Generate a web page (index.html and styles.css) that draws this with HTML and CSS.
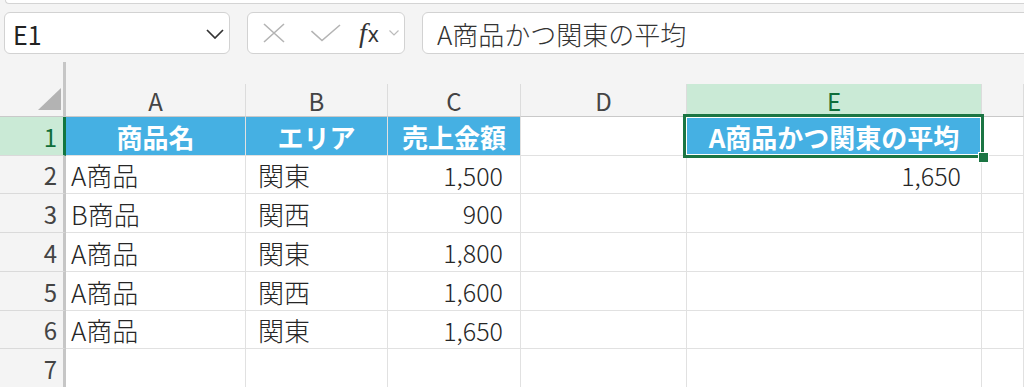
FILE: index.html
```html
<!DOCTYPE html>
<html lang="ja">
  <head>
    <meta charset="UTF-8" />
    <meta name="viewport" content="width=device-width, initial-scale=1.0" />
    <title>Sheet</title>
    <link rel="stylesheet" href="styles.css">
  </head>
  <body>
    <div class="ribbon"></div>

    <!-- Formula bar -->
    <div class="formula-row">
      <div class="name-box">
        <span class="name-text">E1</span>
        <svg class="name-chevron" width="18" height="10" viewBox="0 0 18 10">
          <polyline points="1,1 9,9 17,1" fill="none" stroke="#333" stroke-width="1.7" />
        </svg>
      </div>
      <div class="fx-buttons">
        <svg class="btn-cancel" width="22" height="20" viewBox="0 0 22 20">
          <path d="M1 1 L21 19 M21 1 L1 19" stroke="#b4b4b4" stroke-width="1.6" fill="none" />
        </svg>
        <svg class="btn-enter" width="30" height="18" viewBox="0 0 30 18">
          <polyline points="0.5,7 11,16.5 29,1" fill="none" stroke="#b4b4b4" stroke-width="1.6" />
        </svg>
        <span class="fx"><i>f</i>x</span>
        <svg class="fx-chevron" width="10" height="6" viewBox="0 0 10 6">
          <polyline points="0.5,0.5 5,5 9.5,0.5" fill="none" stroke="#bcbcbc" stroke-width="1.2" />
        </svg>
      </div>
      <div class="formula-input">A商品かつ関東の平均</div>
    </div>

    <!-- Grid -->
    <div class="sheet">
      <div class="corner"><span class="corner-tri"></span></div>
      <div class="top-gap"></div>

      <div class="col-head">A</div>
      <div class="col-head">B</div>
      <div class="col-head">C</div>
      <div class="col-head">D</div>
      <div class="col-head active">E</div>
      <div class="col-head"></div>

      <div class="row-head active">1</div>
      <div class="cell title">商品名</div>
      <div class="cell title">エリア</div>
      <div class="cell title">売上金額</div>
      <div class="cell"></div>
      <div class="cell title selected">A商品かつ関東の平均<div class="selection"><span class="handle"></span></div></div>
      <div class="cell"></div>

      <div class="row-head">2</div>
      <div class="cell">A商品</div>
      <div class="cell area">関東</div>
      <div class="cell num">1,500</div>
      <div class="cell"></div>
      <div class="cell num wide">1,650</div>
      <div class="cell"></div>

      <div class="row-head">3</div>
      <div class="cell">B商品</div>
      <div class="cell area">関西</div>
      <div class="cell num">900</div>
      <div class="cell"></div>
      <div class="cell"></div>
      <div class="cell"></div>

      <div class="row-head">4</div>
      <div class="cell">A商品</div>
      <div class="cell area">関東</div>
      <div class="cell num">1,800</div>
      <div class="cell"></div>
      <div class="cell"></div>
      <div class="cell"></div>

      <div class="row-head">5</div>
      <div class="cell">A商品</div>
      <div class="cell area">関西</div>
      <div class="cell num">1,600</div>
      <div class="cell"></div>
      <div class="cell"></div>
      <div class="cell"></div>

      <div class="row-head">6</div>
      <div class="cell">A商品</div>
      <div class="cell area">関東</div>
      <div class="cell num">1,650</div>
      <div class="cell"></div>
      <div class="cell"></div>
      <div class="cell"></div>

      <div class="row-head">7</div>
      <div class="cell"></div>
      <div class="cell"></div>
      <div class="cell"></div>
      <div class="cell"></div>
      <div class="cell"></div>
      <div class="cell"></div>
    </div>
  </body>
</html>
```

FILE: styles.css
```css
/* Resets */
body {
  margin: 0;
  width: 1024px;
  height: 387px;
  overflow: hidden;
  background: #f4f4f4;
  font-family: "Noto Sans CJK JP", "Noto Sans", sans-serif;
  font-weight: 300;
  color: #262626;
}

/* Ribbon edge */
.ribbon {
  height: 3px;
  margin-left: 5px;
  background: #fff;
  border: 1px solid #d4d4d4;
  border-top: none;
  border-right: none;
  border-radius: 0 0 0 6px;
}

/* Formula bar */
.formula-row {
  display: flex;
  height: 42px;
  margin: 8px -10px 8px 4px;
}
.name-box,
.fx-buttons,
.formula-input {
  box-sizing: border-box;
  height: 42px;
  background: #fff;
  border: 1px solid #d2d2d2;
  border-radius: 6px;
  display: flex;
  align-items: center;
}
.name-box {
  width: 226px;
  padding: 2px 5px 0 8px;
  justify-content: space-between;
}
.name-text {
  font-size: 25px;
  font-weight: 400;
  color: #222;
}
.fx-buttons {
  width: 158px;
  margin-left: 17px;
  padding-left: 15px;
}
.btn-enter {
  margin-left: 26px;
}
.fx {
  margin-left: 18px;
  font-family: "Noto Sans", sans-serif;
  font-weight: 400;
  font-size: 21px;
  line-height: 1;
  color: #333;
}
.fx i {
  font-family: "Liberation Serif", serif;
  font-size: 28px;
  margin-right: 1px;
}
.fx-chevron {
  margin-left: 10px;
}
.formula-input {
  flex: 1;
  margin-left: 17px;
  padding-left: 14px;
  font-size: 26px;
  color: #333;
}

/* Sheet grid */
.sheet {
  display: grid;
  grid-template-columns: 66px 180px 142px 133px 166px 295px 1fr;
  grid-template-rows: 22px 33px 39px 38px 39px 39px 39px 38px 39px;
  background: #fff;
}
.corner {
  grid-row: span 2;
  display: flex;
  justify-content: flex-end;
  align-items: flex-end;
  padding: 0 2px 6px 0;
  background: #f4f4f4;
  border-right: 3px solid #c6c6c6;
  border-bottom: 1px solid #c9c9c9;
}
.corner-tri {
  width: 23px;
  height: 22px;
  background: #b3b3b3;
  clip-path: polygon(100% 0, 100% 100%, 0 100%);
}
.top-gap {
  grid-column: span 6;
  background: #f4f4f4;
}
.col-head {
  display: flex;
  justify-content: center;
  align-items: center;
  font-size: 24px;
  font-weight: 400;
  color: #444;
  background: #f4f4f4;
  border-right: 1px solid #dcdcdc;
  border-bottom: 1px solid #c9c9c9;
}
.col-head.active {
  background: #caead6;
  color: #0f6e3a;
}
.row-head {
  display: flex;
  justify-content: flex-end;
  align-items: center;
  padding-right: 6px;
  font-size: 24px;
  font-weight: 400;
  color: #444;
  background: #f4f4f4;
  border-right: 3px solid #c6c6c6;
  border-bottom: 1px solid #dadada;
}
.row-head.active {
  background: #caead6;
  color: #0f6e3a;
  border-right-color: #13763f;
}

/* Cells */
.cell {
  position: relative;
  display: flex;
  align-items: center;
  padding-left: 5px;
  font-size: 26px;
  white-space: nowrap;
  border-right: 1px solid #e1e1e1;
  border-bottom: 1px solid #e1e1e1;
}
.cell.area {
  padding-left: 12px;
}
.cell.num {
  justify-content: flex-end;
  padding: 0 17px 0 0;
  font-size: 25px;
}
.cell.num.wide {
  padding-right: 20px;
}
.cell.title {
  justify-content: center;
  padding: 0;
  background: #45b0e3;
  color: #fff;
  font-weight: 700;
}
.cell.selected {
  z-index: 1;
}

/* Selection */
.selection {
  position: absolute;
  top: -3px;
  left: -4px;
  right: -3px;
  bottom: -3px;
  border: 3px solid #1b7543;
  box-shadow: inset 0 0 0 1px #fff;
}
.handle {
  position: absolute;
  right: -8px;
  bottom: -8px;
  width: 9px;
  height: 9px;
  background: #1b7543;
  border: 1px solid #fff;
}
```
